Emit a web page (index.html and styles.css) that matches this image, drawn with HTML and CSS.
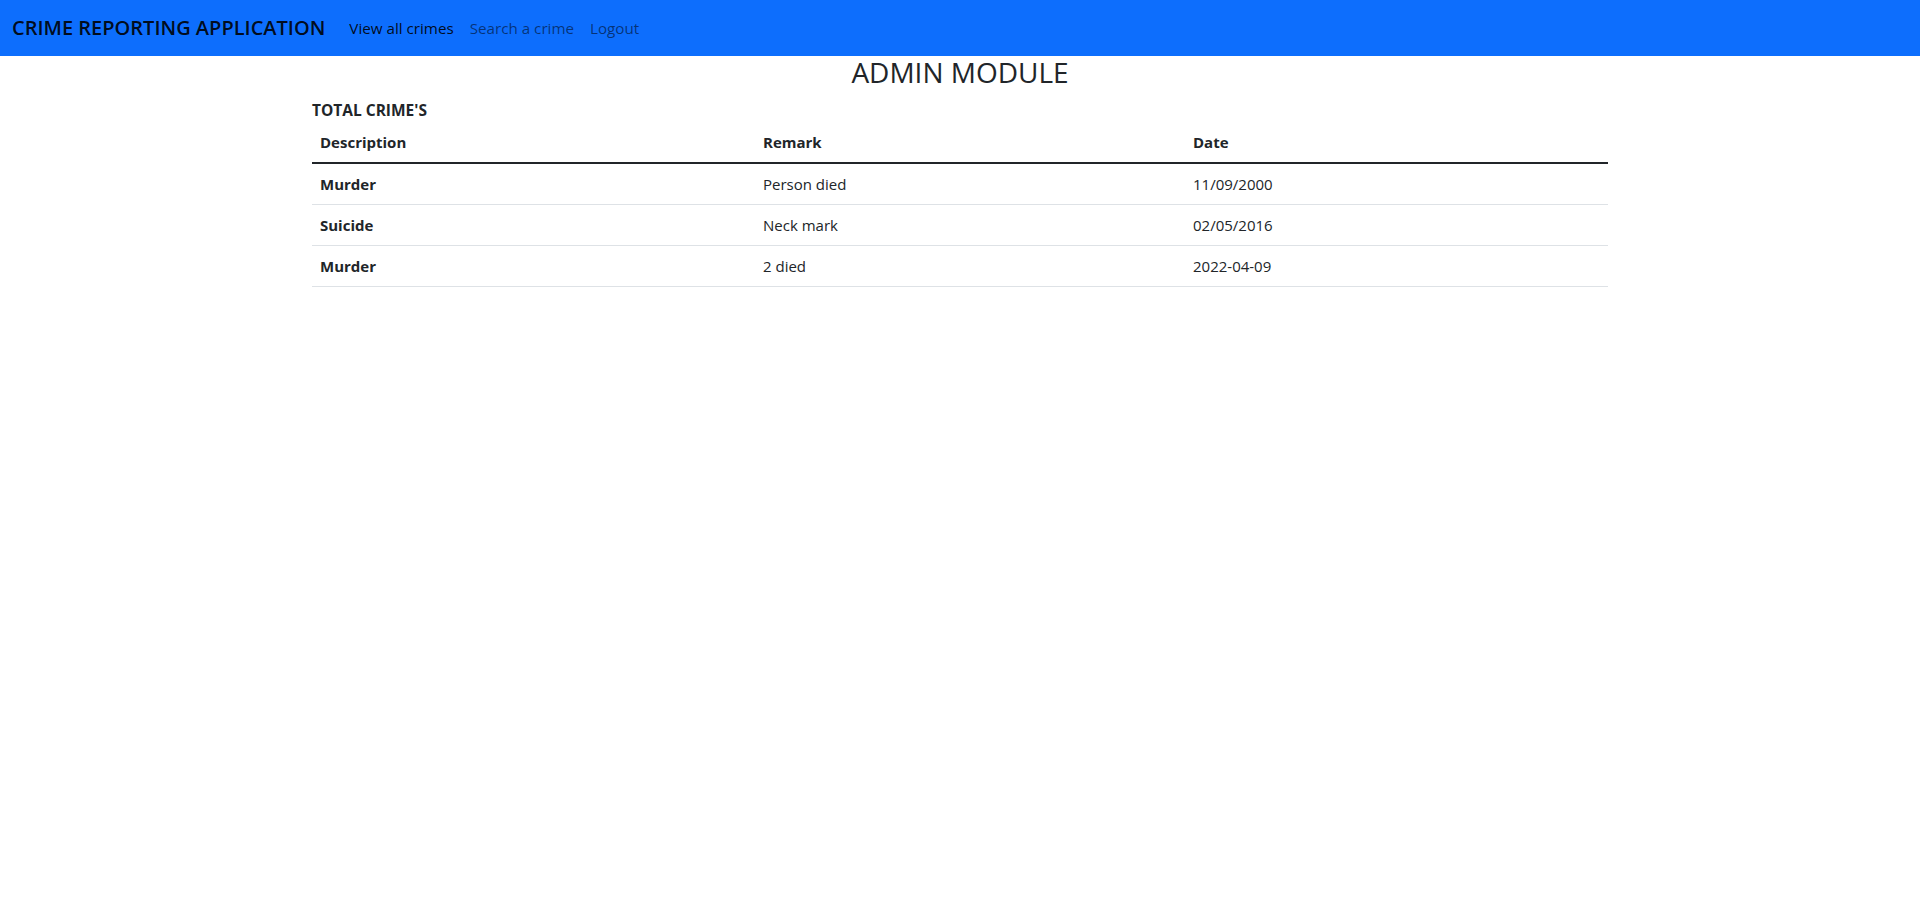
FILE: index.html
```html
<!DOCTYPE html>
<html lang="en">
<head>
<meta charset="utf-8">
<title>Crime Reporting Application</title>
<link rel="stylesheet" href="styles.css">
</head>
<body>
<nav class="navbar">
  <div class="navbar-inner">
    <a class="brand" href="#">CRIME REPORTING APPLICATION</a>
    <ul class="nav-links">
      <li><a class="nav-link active" href="#">View all crimes</a></li>
      <li><a class="nav-link" href="#">Search a crime</a></li>
      <li><a class="nav-link" href="#">Logout</a></li>
    </ul>
  </div>
</nav>
<main class="container">
  <h3 class="page-title">ADMIN MODULE</h3>
  <div class="table-label">TOTAL CRIME'S</div>
  <table class="crime-table">
    <colgroup>
      <col class="col-desc">
      <col class="col-remark">
      <col class="col-date">
    </colgroup>
    <thead>
      <tr><th>Description</th><th>Remark</th><th>Date</th></tr>
    </thead>
    <tbody>
      <tr><th>Murder</th><td>Person died</td><td>11/09/2000</td></tr>
      <tr><th>Suicide</th><td>Neck mark</td><td>02/05/2016</td></tr>
      <tr><th>Murder</th><td>2 died</td><td>2022-04-09</td></tr>
    </tbody>
  </table>
</main>
</body>
</html>
```

FILE: styles.css
```css
* { box-sizing: border-box; }
html, body { margin: 0; padding: 0; }
body {
  font-family: "Open Sans", "Noto Sans", sans-serif;
  font-size: 15px;
  line-height: 24px;
  color: #212529;
  background: #fff;
}
.navbar {
  background: #0d6efd;
  padding: 8px 0;
}
.navbar-inner {
  display: flex;
  align-items: center;
  padding: 0 12px;
}
.brand {
  font-size: 20px;
  font-weight: 600;
  line-height: 30px;
  padding: 5px 0;
  margin-right: 16px;
  color: rgba(0,0,0,.9);
  text-decoration: none;
  white-space: nowrap;
}
.nav-links {
  display: flex;
  list-style: none;
  margin: 0;
  padding: 0;
}
.nav-link {
  display: block;
  padding: 8px 8px;
  font-size: 15.2px;
  color: rgba(0,0,0,.55);
  text-decoration: none;
}
.nav-link.active { color: rgba(0,0,0,.9); }
.container {
  width: 1320px;
  margin: 0 auto;
  padding: 0 12px;
}
.page-title {
  margin: 0 0 8px;
  text-align: center;
  font-size: 28px;
  font-weight: 500;
  line-height: 1.2;
}
.table-label {
  font-weight: 700;
  font-size: 15.5px;
}
.crime-table {
  width: 100%;
  border-collapse: collapse;
  margin-bottom: 16px;
}
.col-desc { width: 443px; }
.col-remark { width: 430px; }
.col-date { width: 423px; }
.crime-table th,
.crime-table td {
  text-align: left;
  padding: 8px;
  border-bottom: 1px solid #dee2e6;
  vertical-align: bottom;
}
.crime-table tbody th,
.crime-table tbody td { vertical-align: top; }
.crime-table th { font-weight: 700; }
.crime-table thead th { border-bottom: 2px solid #212529; }
```
